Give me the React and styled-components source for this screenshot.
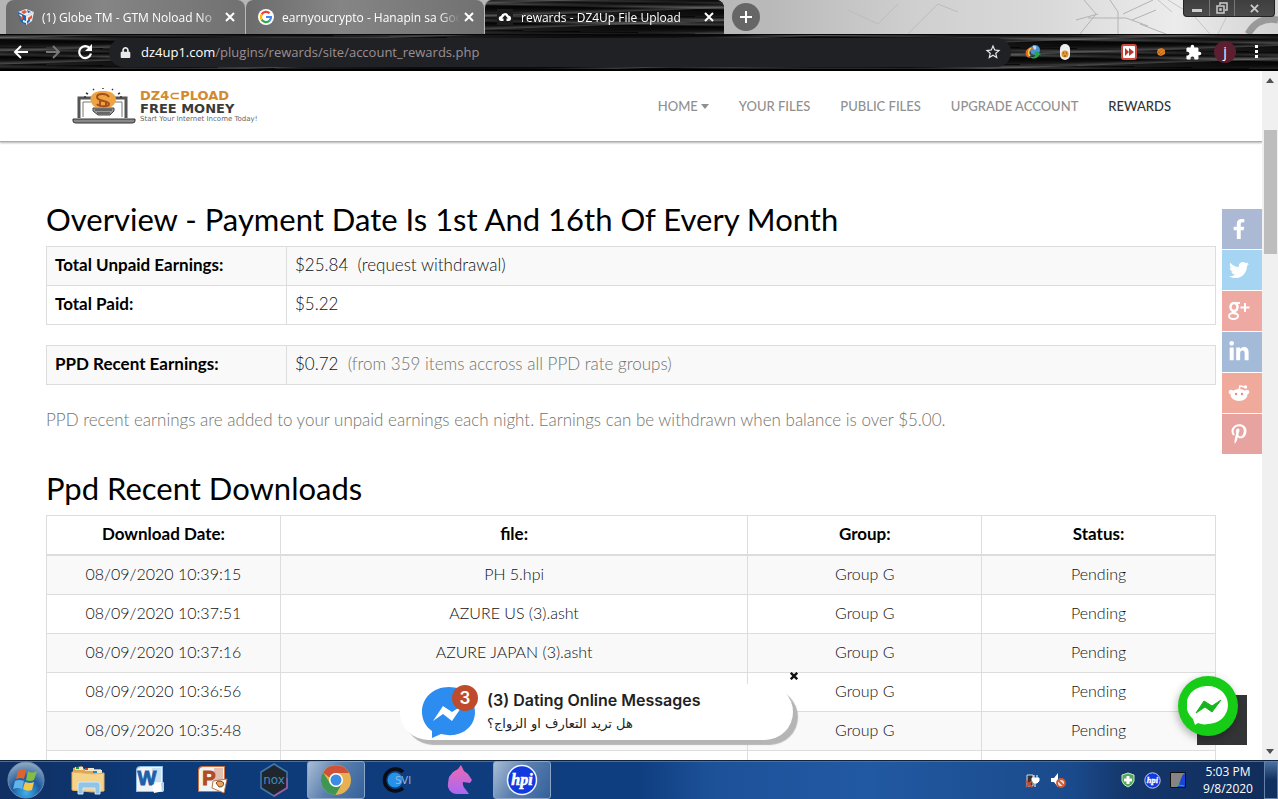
import styled, { createGlobalStyle, css } from 'styled-components';
import { FaFacebookF, FaTwitter, FaLinkedinIn, FaPinterestP, FaLock } from 'react-icons/fa';
import { MdExtension, MdStarBorder } from 'react-icons/md';

const GlobalStyle = createGlobalStyle`
  * {
    box-sizing: border-box;
  }

  body {
    margin: 0;
    background: #fff;
    overflow: hidden;
  }

  button {
    padding: 0;
    border: 0;
    background: none;
    font: inherit;
    color: inherit;
  }

  a {
    color: inherit;
    text-decoration: none;
  }

  svg {
    display: block;
    flex: none;
  }
`;

const uiFont = "'Open Sans', 'Noto Sans', sans-serif";
const pageFont = "Lato, 'Open Sans', sans-serif";

const Desktop = styled.div`
  display: flex;
  flex-direction: column;
  height: 100vh;
  font-family: ${uiFont};
`;

/* browser window */

const TabStrip = styled.div`
  position: relative;
  display: flex;
  height: 34px;
  padding-left: 6px;
  background: linear-gradient(90deg, #b5b5b5, #b9b9b9 60%, #d0d0d0 72%, #d9d9d9 82%, #ececec 92%, #d2d2d2);
`;

const Branches = styled.svg`
  position: absolute;
  top: 0;
  right: 0;
`;

const streaks = css`
  background-color: #0d0d0d;
  background-image: repeating-linear-gradient(
      178deg,
      transparent 0,
      rgba(150, 150, 150, 0.35) 3px,
      transparent 4px,
      rgba(0, 0, 0, 0.5) 9px,
      transparent 13px
    ),
    repeating-linear-gradient(181deg, #080808 0, #3a3a3a 3px, #111 5px, #4a4a4a 8px, #060606 10px, #222 17px);
`;

const Tab = styled.div`
  position: relative;
  display: flex;
  align-items: center;
  gap: 8px;
  flex: 0 1 ${({ $active }) => ($active ? '240px' : '239px')};
  min-width: 0;
  padding: 0 10px 0 12px;
  border-radius: 8px 8px 0 0;
  background: linear-gradient(90deg, #6c6c6c, #858585 40%, #717171);
  color: #fff;
  font-size: 12px;

  & + & {
    border-left: 1px solid #b9b9b9;
  }

  ${({ $active }) => $active && streaks}
`;

const TabTitle = styled.span`
  flex: 1;
  min-width: 0;
  margin-right: -4px;
  overflow: hidden;
  white-space: nowrap;
  mask-image: linear-gradient(90deg, #000 88%, transparent);
`;

const NewTab = styled.button`
  position: relative;
  display: grid;
  place-items: center;
  width: 28px;
  height: 28px;
  margin: 3px 8px;
  border-radius: 50%;
  background: #666;
`;

const WindowControls = styled.div`
  position: absolute;
  top: 0;
  right: 3px;
  display: flex;
  height: 17px;
  border: 1px solid #222;
  border-top: 0;
  border-radius: 0 0 4px 4px;
  background: linear-gradient(#3e3e3e, #4b4b4b);
`;

const WindowButton = styled.button`
  display: grid;
  place-items: center;
  width: ${({ $wide }) => ($wide ? '40px' : '25px')};

  & + & {
    border-left: 1px solid #777;
  }
`;

const Toolbar = styled.div`
  display: flex;
  align-items: center;
  height: 37px;
  padding: 0 5px;
  ${streaks}
  border-top: 1px solid #070707;
  border-bottom: 2px solid #000;
`;

const ToolButton = styled.button`
  display: grid;
  place-items: center;
  width: 32px;
  height: 28px;
  color: #fff;
`;

const AddressBar = styled.form`
  display: flex;
  align-items: center;
  flex: 1;
  gap: 10px;
  height: 29px;
  margin: 0 6px 0 8px;
  padding: 0 9px 0 11px;
  border-radius: 15px;
  background: #202124;
  color: #e8e8e8;
`;

const Address = styled.label`
  position: relative;
  flex: 1;
  font-size: 13px;
  line-height: 20px;
  color: #9c8f93;
  white-space: nowrap;

  b {
    font-weight: 400;
    color: #fff;
  }

  input {
    position: absolute;
    inset: 0;
    width: 100%;
    border: 0;
    background: none;
    outline: none;
  }
`;

const Avatar = styled.span`
  display: grid;
  place-items: center;
  width: 22px;
  height: 22px;
  border-radius: 50%;
  background: #5c1f30;
  font-size: 14px;
  line-height: 20px;
`;

/* site */

const Viewport = styled.div`
  position: relative;
  display: flex;
  flex: 1;
  min-height: 0;
  overflow: hidden;
`;

const Page = styled.div`
  position: relative;
  flex: 1;
  min-width: 0;
  overflow: hidden;
  font-family: ${pageFont};
`;

const SiteHeader = styled.header`
  display: flex;
  align-items: center;
  justify-content: space-between;
  height: 71px;
  padding: 0 91px 0 72px;
  border-bottom: 1px solid #a9b0ac;
  box-shadow: 0 1px 2px rgba(0, 0, 0, 0.3);
`;

const Brand = styled.a`
  display: flex;
  align-items: center;
  gap: 4px;
  font-family: 'DejaVu Sans', sans-serif;
`;

const BrandText = styled.span`
  display: flex;
  flex-direction: column;
  white-space: nowrap;
`;

const BrandLine = styled.span`
  font-size: 13px;
  font-weight: 700;
  line-height: 13px;
  color: ${({ $accent }) => ($accent ? '#d48a2a' : '#3a3a3a')};
`;

const Tagline = styled.span`
  font-size: 7px;
  line-height: 8px;
  color: #666;
`;

const Nav = styled.nav`
  display: flex;
  gap: 30px;
  font-family: ${pageFont};
  font-size: 13px;
  font-weight: 500;
  line-height: 16px;
`;

const NavLink = styled.a`
  display: flex;
  align-items: center;
  gap: 3px;
  color: ${({ $current }) => ($current ? '#333' : '#909090')};
`;

const Content = styled.main`
  padding: 60px 46px 0;
  color: #111;
  font-size: 17px;
  font-weight: 300;
  line-height: 22px;
`;

const Heading = styled.h2`
  margin: 0 0 9px;
  color: #000;
  font-size: 31px;
  font-weight: 400;
  line-height: 35px;
  white-space: nowrap;
`;

const Table = styled.table`
  width: 100%;
  margin-bottom: 20px;
  border-collapse: collapse;
  table-layout: fixed;

  th,
  td {
    padding: 7px 8px 9px;
    border: 1px solid #ddd;
    font-weight: 300;
    text-align: ${({ $centered }) => ($centered ? 'center' : 'left')};
    white-space: nowrap;
  }

  td {
    font-size: ${({ $centered }) => ($centered ? '16px' : '17px')};
  }

  th {
    color: #000;
    font-weight: 700;
  }

  tbody th {
    width: 240px;
  }

  thead th {
    border-bottom-width: 2px;
  }

  tbody tr:nth-child(odd) {
    background: #f9f9f9;
  }
`;

const Note = styled.span`
  color: #73736a;
`;

const Hint = styled.p`
  margin: 24px 0 40px;
  color: #73736a;
`;

const ShareBar = styled.aside`
  position: absolute;
  top: 138px;
  right: 0;
  display: flex;
  flex-direction: column;
  gap: 1px;
`;

const ShareLink = styled.a`
  display: flex;
  align-items: center;
  justify-content: center;
  width: 40px;
  height: 40px;
  padding-right: 6px;
  background: ${({ $color }) => $color};
  color: #fff;
`;

const Popup = styled.section`
  position: absolute;
  bottom: 20px;
  left: 400px;
  display: flex;
  align-items: center;
  gap: 8px;
  width: 393px;
  height: 56px;
  padding-left: 22px;
  border-radius: 28px;
  background: #fff;
  box-shadow: 5px 5px 1px #b5b5b5;
`;

const PopupText = styled.div`
  display: flex;
  flex-direction: column;
  align-items: flex-start;
  color: #222;
`;

const PopupTitle = styled.strong`
  font-family: Inter, sans-serif;
  font-size: 16px;
  font-weight: 600;
  line-height: 24px;
`;

const PopupMessage = styled.span`
  font-family: 'DejaVu Sans', sans-serif;
  font-size: 13px;
  line-height: 24px;
`;

const PopupClose = styled.button`
  position: absolute;
  top: -12px;
  right: -5px;
`;

const TopButton = styled.button`
  position: absolute;
  right: 15px;
  bottom: 15px;
  width: 50px;
  height: 50px;
  background: #333436;
`;

const ChatButton = styled.button`
  position: absolute;
  right: 24px;
  bottom: 24px;
  display: grid;
  place-items: center;
  width: 60px;
  height: 60px;
  border-radius: 50%;
  background: #16cc16;
  box-shadow: -1px 3px 8px rgba(0, 0, 0, 0.3);
`;

const Scrollbar = styled.div`
  display: flex;
  flex-direction: column;
  align-items: center;
  width: 16px;
  padding: 7px 0 6px;
  background: #f0f0f0;
`;

const Thumb = styled.div`
  width: 13px;
  height: 124px;
  margin: 47px 0 auto 1px;
  background: #bdbdbd;
`;

/* taskbar */

const Taskbar = styled.footer`
  display: flex;
  align-items: stretch;
  height: 39px;
  border-top: 1px solid #10233f;
  background: linear-gradient(
    90deg,
    #102f62,
    #0d3a78 12%,
    #0f3e80 50%,
    #1d529a 56%,
    #2159a2 68%,
    #1a4a8b 84%,
    #14376c 88%,
    #102c59
  );
  box-shadow: inset 0 1px 0 #48709f;
  color: #fff;
`;

const StartButton = styled.button`
  display: grid;
  place-items: center;
  width: 52px;
  margin-right: 7px;
`;

const Apps = styled.div`
  display: flex;
  flex: 1;
  gap: 4px;
`;

const AppButton = styled.button`
  display: grid;
  place-items: center;
  width: 58px;
  border: 1px solid transparent;
  border-radius: 3px;

  ${({ $open }) =>
    $open &&
    css`
      border-color: #8ba5c8;
      background: linear-gradient(120deg, #a9bdd6, #5c80ae 45%, #34619b);
    `}
`;

const Tray = styled.div`
  display: flex;
  align-items: center;
`;

const TrayGroup = styled.div`
  display: flex;
  gap: 9px;
  margin-right: ${({ $spaced }) => ($spaced ? '55px' : '6px')};
`;

const Clock = styled.time`
  display: flex;
  flex-direction: column;
  align-items: center;
  width: 72px;
  font-size: 12px;
  line-height: 17px;
  white-space: nowrap;
`;

const ShowDesktop = styled.button`
  align-self: stretch;
  width: 14px;
  border: 1px solid #6482ab;
  background: linear-gradient(#4a6f9f, #12305f 50%);
`;

const CloseIcon = ({ size = 10, color = '#fff', weight = 2 }) => (
  <svg width={size} height={size} viewBox="0 0 10 10" stroke={color} strokeWidth={weight}>
    <path d="M1 1l8 8M9 1l-8 8" />
  </svg>
);

const CubeIcon = () => (
  <svg width="16" height="16" viewBox="0 0 16 16">
    <path d="M0 3l8-3 8 3-8 4z" fill="#e9eef4" />
    <path d="M0 3l8 4v9l-6-4z" fill="#1b67b5" />
    <path d="M16 3L8 7v9l6-4z" fill="#e4ecf5" />
    <path d="M3 3l4-2 2 2-3 2zM2 8l3-1v3l-2 1zM10 9l4-3v3l-4 3z" fill="#e65736" />
    <path d="M9 1l4 2-3 1zM9 12l3-2v2l-3 3z" fill="#1b67b5" />
    <path d="M1 5l3 1v2L2 7zM5 11l3 1v2l-3-1z" fill="#e8f1fb" />
  </svg>
);

const GoogleIcon = () => (
  <svg width="16" height="16" viewBox="0 0 16 16">
    <circle cx="8" cy="8" r="8" fill="#fff" />
    <g fill="none" strokeWidth="2.2">
      <path d="M11.6 4.3A5 5 0 0 0 3.7 5.4" stroke="#ea4335" />
      <path d="M3.7 5.4a5 5 0 0 0 0 5.2" stroke="#fbbc05" />
      <path d="M3.7 10.6a5 5 0 0 0 7.8 1.1" stroke="#34a853" />
      <path d="M11.5 11.7A5 5 0 0 0 13 8H8" stroke="#4285f4" />
    </g>
  </svg>
);

const CloudIcon = () => (
  <svg width="16" height="16" viewBox="0 0 16 16">
    <path d="M0 0h16v16H0z" fill="#1c1c1c" />
    <path
      d="M4.5 12a2.5 2.5 0 0 1-.5-5 4 4 0 0 1 7.5-.5A2.8 2.8 0 0 1 12 12H9.5V9.5H11L8 6 5 9.5h1.5V12z"
      fill="#fff"
    />
  </svg>
);

const ArrowIcon = ({ forward }) => (
  <svg width="16" height="16" viewBox="0 0 16 16" fill="none" stroke={forward ? '#777' : '#fff'} strokeWidth="2">
    {forward ? <path d="M1 8h13M8 2l6 6-6 6" /> : <path d="M15 8H2M8 2L2 8l6 6" />}
  </svg>
);

const ReloadIcon = () => (
  <svg width="16" height="16" viewBox="0 0 16 16">
    <path d="M13 4.5A6 6 0 1 0 14 9.5" fill="none" stroke="#fff" strokeWidth="2.2" />
    <path d="M15 0v7H8z" fill="#fff" />
  </svg>
);

const GlobeExtIcon = () => (
  <svg width="16" height="16" viewBox="0 0 16 16">
    <circle cx="10" cy="6" r="5" fill="#4a92d0" />
    <path d="M8 2c3-1 4 1 3 3s-3 0-3-3z" fill="#b9dff0" />
    <path d="M7 3C1 4-1 9 2 13l3 1C3 9 4 6 8 5z" fill="#e2682c" />
    <path d="M6 4C3 6 3 10 5 12" fill="none" stroke="#f4d444" strokeWidth="1.5" />
    <path d="M4 12c4 2 6 1 7-2H8l4-3 4 4h-2c-1 4-7 5-10 1z" fill="#27a744" />
  </svg>
);

const CapsuleIcon = () => (
  <svg width="10" height="16" viewBox="0 0 10 16">
    <rect width="10" height="16" rx="5" fill="#eee" />
    <circle cx="5" cy="10" r="3.5" fill="#df9430" />
    <path d="M3 9h1M6 9h1M4 12h2" stroke="#7c4a0c" />
  </svg>
);

const SkipIcon = () => (
  <svg width="16" height="16" viewBox="0 0 16 16">
    <rect x="1" y="1" width="14" height="14" rx="2" fill="#fff" stroke="#d3473b" strokeWidth="2" />
    <path d="M4 4l4 4-4 4zM8 4l5 4-5 4z" fill="#b5382b" />
  </svg>
);

const NutIcon = () => (
  <svg width="10" height="10" viewBox="0 0 10 10">
    <path d="M2 2l4-1 3 2v4L5 9 2 8 1 5z" fill="#de8425" />
    <path d="M2 6l5-4M4 8l5-4M2 4l3 4" stroke="#b0571a" strokeWidth="0.7" />
  </svg>
);

const LaptopLogo = () => (
  <svg width="64" height="36" viewBox="0 0 64 36" fill="none">
    <path d="M7 30V10h13M40 10h14v20" stroke="#555" strokeWidth="3" />
    <path d="M11 29V14h8M41 14h9v15" stroke="#777" />
    <path d="M1 31h62v2q0 2-3 2H4q-3 0-3-2z" fill="#888" stroke="#333" />
    <path d="M23 19c-7-5-7-16 8-16s16 11 8 16z" fill="#eda443" />
    <path
      d="M37 9c-2-4-12-4-12 0 0 5 12 3 12 7 0 3-10 3-12 0M28 18v-5M34 18v-5"
      stroke="#a74e1c"
      strokeWidth="2"
    />
    <path d="M21 20h21v3l-4 4H26l-5-4z" fill="#999" stroke="#444" />
    <path d="M23 22h17M25 25h13" stroke="#333" />
    <path d="M31 0v1M22 2l-1-1M40 2l1-1M16 6l-2-1M46 6l2-1M14 9h-2M48 9h2" stroke="#333" strokeWidth="1.5" />
  </svg>
);

const GooglePlusIcon = () => (
  <svg width="24" height="20" viewBox="0 0 24 20" fill="none" stroke="#fff">
    <ellipse cx="7" cy="6" rx="3.5" ry="4" strokeWidth="2.5" />
    <ellipse cx="6.5" cy="15" rx="4.5" ry="3" strokeWidth="2" />
    <path d="M7 2h6M7 10c-2 1 0 2 2 3" strokeWidth="2" />
    <path d="M18 2v9M13.5 6.5h9" strokeWidth="2" />
  </svg>
);

const RedditIcon = () => (
  <svg width="22" height="20" viewBox="0 0 22 20">
    <ellipse cx="11" cy="12" rx="8.5" ry="6" fill="#fff" />
    <circle cx="3" cy="9" r="2.3" fill="#fff" />
    <circle cx="19" cy="9" r="2.3" fill="#fff" />
    <path d="M11 7l1-4 5 1" fill="none" stroke="#fff" strokeWidth="1.5" />
    <circle cx="17.5" cy="4" r="1.7" fill="#fff" />
    <circle cx="8" cy="11" r="1.2" fill="#e58f78" />
    <circle cx="14" cy="11" r="1.2" fill="#e58f78" />
  </svg>
);

const BlueMessenger = () => (
  <svg width="57" height="54" viewBox="0 0 57 54">
    <path d="M27 2C11 2 0 13 0 27c0 8 4 15 10 19v7l9-4c20 5 34-7 34-22C53 13 42 2 27 2z" fill="#2c8cf0" />
    <path d="M11 36l10-15 9 6 11-7-11 16-9-7z" fill="#fff" />
    <circle cx="43" cy="13" r="13" fill="#bd4b2c" />
    <text x="43" y="19" textAnchor="middle" fill="#fff" fontFamily="Inter, sans-serif" fontSize="17" fontWeight="600">
      3
    </text>
  </svg>
);

const GreenMessenger = () => (
  <svg width="42" height="42" viewBox="0 0 42 42">
    <path d="M21 1a20 19 0 0 1 0 38c-4 1-7 0-10-1l-3 2-2-6A20 19 0 0 1 21 1z" fill="#fff" />
    <path d="M9 28l8-12 8 5 9-6-9 12-7-5z" fill="#16b51c" stroke="#16b51c" />
  </svg>
);

const Triangle = ({ down, color = '#505050' }) => (
  <svg width="8" height="5" viewBox="0 0 8 5" fill={color}>
    <path d={down ? 'M0 0h8L4 5z' : 'M0 5h8L4 0z'} />
  </svg>
);

const StartIcon = () => (
  <svg width="38" height="38" viewBox="0 0 38 38">
    <defs>
      <radialGradient id="orb" cx="50%" cy="85%" r="80%">
        <stop offset="0" stopColor="#3fb2ee" />
        <stop offset="0.5" stopColor="#1d5b9f" />
        <stop offset="1" stopColor="#8aa4bd" />
      </radialGradient>
    </defs>
    <circle cx="19" cy="19" r="18" fill="url(#orb)" stroke="#6c8eb5" />
    <path d="M11 10q4-3 8-1l-2 9q-4-2-8 0z" fill="#e0632c" />
    <path d="M21 10q4 3 9 0l-3 9q-4 2-8 0z" fill="#83bd43" />
    <path d="M8 20q4-2 9 0l-2 8q-4-2-9 0z" fill="#5fb5ea" />
    <path d="M18 21q5 2 9 0l-2 8q-5 2-9-1z" fill="#f6c64b" />
  </svg>
);

const FolderIcon = () => (
  <svg width="34" height="32" viewBox="0 0 34 32">
    <path d="M2 4l9-2 2 3h17v22H2z" fill="#dca654" />
    <path d="M4 3h8v3H4zM14 4h9v3h-9zM23 6h8v3h-8z" fill="#f3e6c2" />
    <path d="M5 3h3v2H5z" fill="#2b9b39" />
    <path d="M14 4h3v2h-3z" fill="#ca3c24" />
    <path d="M22 7h4v2h-4z" fill="#2e7fca" />
    <path d="M1 8l22 2 10-1v18l-12 1-20-2z" fill="#f4d38d" stroke="#e7b35e" />
    <path d="M7 30V21q0-3 3-3h16q3 0 3 3v9h-5v-6H12v6z" fill="#90c5e7" stroke="#d1e8f6" />
  </svg>
);

const OfficeIcon = ({ letter, color, dark, children }) => (
  <svg width="32" height="32" viewBox="0 0 32 32">
    <path d="M2 6q0-4 5-4h22v26H2z" fill={color} />
    <path d="M3 7q0-4 5-4h20v24H3z" fill="#f1f4f7" />
    <path d="M18 4h9v14h-9z" fill={color} opacity="0.4" />
    <text
      x="13"
      y="21"
      textAnchor="middle"
      fill={dark}
      stroke={dark}
      fontFamily="Liberation Sans, sans-serif"
      fontSize="20"
      fontWeight="700"
    >
      {letter}
    </text>
    {children}
  </svg>
);

const WordIcon = () => (
  <OfficeIcon letter="W" color="#8fbde3" dark="#1f5fa8">
    <path d="M18 21l10-3 2 9-10 2z" fill="#fff" />
    <path d="M27 19l3-1v9l-2 1z" fill="#b5cfe6" />
  </OfficeIcon>
);

const PowerPointIcon = () => (
  <OfficeIcon letter="P" color="#cc7040" dark="#b34b1c">
    <path d="M17 17l14-2-3 14-12-5z" fill="#fff" stroke="#b9744d" />
    <path d="M20 19a4 3 0 1 1 3 4z" fill="#e5a35c" stroke="#7b4a2a" />
  </OfficeIcon>
);

const NoxIcon = () => (
  <svg width="30" height="34" viewBox="0 0 30 34">
    <path d="M15 1l13 8v16l-13 8-13-8V9z" fill="#20262e" stroke="#407aa9" strokeWidth="1.5" />
    <path d="M28 15v10l-13 8" fill="none" stroke="#9b5a9d" strokeWidth="1.5" />
    <text x="15" y="21" textAnchor="middle" fill="#3f8cc0" fontFamily="DejaVu Sans, sans-serif" fontSize="12">
      nox
    </text>
  </svg>
);

const ChromeIcon = () => (
  <svg width="30" height="30" viewBox="0 0 30 30">
    <circle cx="15" cy="15" r="15" fill="#e8b14f" />
    <path d="M2 7.5A15 15 0 0 1 28 8H15a7 7 0 0 0-6.5 4.5z" fill="#cf5138" />
    <path d="M2 7.5A15 15 0 0 0 14.5 30L21 18.5A7 7 0 0 1 9 18z" fill="#3f9552" />
    <circle cx="15" cy="15" r="7" fill="#fff" />
    <circle cx="15" cy="15" r="5.5" fill="#3b8ce2" />
  </svg>
);

const SviIcon = () => (
  <svg width="34" height="26" viewBox="0 0 34 26">
    <circle cx="14" cy="13" r="7.5" fill="#2591e8" />
    <path d="M22 5A11 11 0 1 0 22 21" fill="none" stroke="#090d16" strokeWidth="3.5" />
    <text x="14" y="17" fill="#8fb6dd" fontFamily="DejaVu Sans, sans-serif" fontSize="10">
      SVI
    </text>
  </svg>
);

const WolfIcon = () => (
  <svg width="26" height="30" viewBox="0 0 26 30">
    <defs>
      <linearGradient id="wolf" x1="0" y1="0" x2="0" y2="1">
        <stop offset="0" stopColor="#ef68b2" />
        <stop offset="1" stopColor="#a768f3" />
      </linearGradient>
    </defs>
    <path d="M14 0l3 6 4 3 4 6-2 3-7-1c-1 5 3 7 6 12H10C4 29 0 24 1 18l1-6 4-5 5-3z" fill="url(#wolf)" />
  </svg>
);

const HpiIcon = ({ size = 32 }) => (
  <svg width={size} height={size} viewBox="0 0 32 32">
    <circle cx="16" cy="16" r="14.5" fill="#1238e0" stroke="#eef4ff" strokeWidth="1.5" />
    <text
      x="16"
      y="21"
      textAnchor="middle"
      fill="#fff"
      stroke="#fff"
      strokeWidth="0.6"
      fontFamily="Liberation Serif, serif"
      fontSize="16"
      fontStyle="italic"
      fontWeight="700"
    >
      hpi
    </text>
  </svg>
);

const PlugIcon = () => (
  <svg width="16" height="16" viewBox="0 0 16 16">
    <path d="M2 3h6v11H2z" fill="#333" stroke="#ddd" />
    <path d="M7 6h7v3l-2 2H9L7 9zM9 3v3M12 3v3M10 11v4" fill="#fff" stroke="#fff" />
    <path d="M1 9l6 6M7 9l-6 6" stroke="#c84c30" strokeWidth="2" />
  </svg>
);

const MutedIcon = () => (
  <svg width="16" height="16" viewBox="0 0 16 16">
    <path d="M1 6h3l4-5v14l-4-5H1z" fill="#fff" />
    <circle cx="11" cy="11" r="4" fill="#e9d9cf" stroke="#cc5b33" strokeWidth="1.8" />
    <path d="M8 8l6 6" stroke="#cc5b33" strokeWidth="1.8" />
  </svg>
);

const ShieldIcon = () => (
  <svg width="14" height="16" viewBox="0 0 14 16">
    <path d="M7 1l6 2v6q-1 4-6 6-5-2-6-6V3z" fill="#55a957" stroke="#c6e8c6" />
    <path d="M7 4v8M3 8h8" stroke="#fff" strokeWidth="3" />
  </svg>
);

const MeterIcon = () => (
  <svg width="16" height="16" viewBox="0 0 16 16">
    <path d="M.5.5h15v15H.5z" fill="#858585" stroke="#111" />
    <path d="M15 1v14H7c4-3 3-11 8-14z" fill="#1745d8" />
    <path d="M6 14l3-1 5 1" fill="none" stroke="#35b651" />
  </svg>
);

const tabs = [
  { title: '(1) Globe TM - GTM Noload No', icon: <CubeIcon /> },
  { title: 'earnyoucrypto - Hanapin sa Goo', icon: <GoogleIcon /> },
  { title: 'rewards - DZ4Up File Upload', icon: <CloudIcon />, active: true },
];

const share = [
  { name: 'Facebook', color: '#abb9d5', icon: <FaFacebookF size={20} /> },
  { name: 'Twitter', color: '#a5d5f3', icon: <FaTwitter size={20} /> },
  { name: 'Google Plus', color: '#efa9a3', icon: <GooglePlusIcon /> },
  { name: 'LinkedIn', color: '#a4bad9', icon: <FaLinkedinIn size={22} /> },
  { name: 'Reddit', color: '#efaa9b', icon: <RedditIcon /> },
  { name: 'Pinterest', color: '#e7a39f', icon: <FaPinterestP size={20} /> },
];

const downloads = [
  ['08/09/2020 10:39:15', 'PH 5.hpi'],
  ['08/09/2020 10:37:51', 'AZURE US (3).asht'],
  ['08/09/2020 10:37:16', 'AZURE JAPAN (3).asht'],
  ['08/09/2020 10:36:56', ''],
  ['08/09/2020 10:35:48', ''],
  ['', ''],
];

const apps = [
  { name: 'Explorer', icon: <FolderIcon /> },
  { name: 'Word', icon: <WordIcon /> },
  { name: 'PowerPoint', icon: <PowerPointIcon /> },
  { name: 'Nox', icon: <NoxIcon /> },
  { name: 'Chrome', icon: <ChromeIcon />, open: true },
  { name: 'SVI', icon: <SviIcon /> },
  { name: 'Wolf', icon: <WolfIcon /> },
  { name: 'HPI', icon: <HpiIcon />, open: true },
];

function BrowserTop() {
  return (
    <>
      <TabStrip>
        <Branches width="430" height="34" viewBox="0 0 430 34" fill="none" stroke="#b3b3b3" aria-hidden="true">
          <path d="M236 0l12 14-16 20M240 18h38l22 8M262 0l8 12v22M275 14l30-14M250 14l-22 6M284 20l24-10M292 24l26 10" />
          <path d="M320 0l26 16 30-4M346 16l16 18M366 0l12 18-8 16M310 0l14 12" stroke="#c4c4c4" />
          <path d="M430 20q-20-4-30 14" stroke="#999" strokeWidth="7" />
          <path d="M0 10l30 14 20-20M60 34l30-30 20 8" stroke="#bdbdbd" />
        </Branches>
        {tabs.map(({ title, icon, active }) => (
          <Tab key={title} $active={active}>
            {icon}
            <TabTitle>{title}</TabTitle>
            <button type="button" aria-label="Close tab">
              <CloseIcon />
            </button>
          </Tab>
        ))}
        <NewTab type="button" aria-label="New tab">
          <svg width="12" height="12" viewBox="0 0 12 12" stroke="#fff" strokeWidth="2">
            <path d="M6 0v12M0 6h12" />
          </svg>
        </NewTab>
        <WindowControls>
          <WindowButton type="button" aria-label="Minimize">
            <svg width="10" height="10" viewBox="0 0 10 10" fill="#ccc">
              <path d="M0 6h10v3H0z" />
            </svg>
          </WindowButton>
          <WindowButton type="button" aria-label="Restore">
            <svg width="12" height="12" viewBox="0 0 12 12" fill="none" stroke="#ccc" strokeWidth="1.5">
              <path d="M4 3V1h7v7H9M1 4h7v7H1zM4 7h1v1H4z" />
            </svg>
          </WindowButton>
          <WindowButton type="button" $wide aria-label="Close">
            <CloseIcon size={9} color="#ccc" />
          </WindowButton>
        </WindowControls>
      </TabStrip>
      <Toolbar>
        <ToolButton type="button" aria-label="Back">
          <ArrowIcon />
        </ToolButton>
        <ToolButton type="button" aria-label="Forward">
          <ArrowIcon forward />
        </ToolButton>
        <ToolButton type="button" aria-label="Reload">
          <ReloadIcon />
        </ToolButton>
        <AddressBar>
          <FaLock size={11} />
          <Address>
            <b>dz4up1.com</b>/plugins/rewards/site/account_rewards.php
            <input type="text" aria-label="Address" />
          </Address>
          <MdStarBorder size={18} />
        </AddressBar>
        <ToolButton type="button" aria-label="Download manager">
          <GlobeExtIcon />
        </ToolButton>
        <ToolButton type="button" aria-label="Capsule">
          <CapsuleIcon />
        </ToolButton>
        <ToolButton type="button" aria-label="Blank extension" />
        <ToolButton type="button" aria-label="Skip">
          <SkipIcon />
        </ToolButton>
        <ToolButton type="button" aria-label="Nut">
          <NutIcon />
        </ToolButton>
        <ToolButton type="button" aria-label="Extensions">
          <MdExtension size={17} />
        </ToolButton>
        <ToolButton type="button" aria-label="Profile">
          <Avatar>j</Avatar>
        </ToolButton>
        <ToolButton type="button" aria-label="Menu">
          <svg width="4" height="14" viewBox="0 0 4 14" fill="#fff">
            <path d="M0 0h3v3H0zM0 5h3v3H0zM0 10h3v3H0z" />
          </svg>
        </ToolButton>
      </Toolbar>
    </>
  );
}

function Site() {
  return (
    <Page>
      <SiteHeader>
        <Brand href="#">
          <LaptopLogo />
          <BrandText>
            <BrandLine $accent>DZ4⊂PLOAD</BrandLine>
            <BrandLine>FREE MONEY</BrandLine>
            <Tagline>Start Your Internet Income Today!</Tagline>
          </BrandText>
        </Brand>
        <Nav>
          <NavLink href="#">
            HOME <Triangle down color="#909090" />
          </NavLink>
          <NavLink href="#">YOUR FILES</NavLink>
          <NavLink href="#">PUBLIC FILES</NavLink>
          <NavLink href="#">UPGRADE ACCOUNT</NavLink>
          <NavLink href="#" $current>
            REWARDS
          </NavLink>
        </Nav>
      </SiteHeader>

      <Content>
        <Heading>Overview - Payment Date Is 1st And 16th Of Every Month</Heading>
        <Table>
          <tbody>
            <tr>
              <th scope="row">Total Unpaid Earnings:</th>
              <td>
                $25.84&nbsp; <a href="#">(request withdrawal)</a>
              </td>
            </tr>
            <tr>
              <th scope="row">Total Paid:</th>
              <td>$5.22</td>
            </tr>
          </tbody>
        </Table>
        <Table>
          <tbody>
            <tr>
              <th scope="row">PPD Recent Earnings:</th>
              <td>
                $0.72&nbsp; <Note>(from 359 items accross all PPD rate groups)</Note>
              </td>
            </tr>
          </tbody>
        </Table>
        <Hint>
          PPD recent earnings are added to your unpaid earnings each night. Earnings can be withdrawn when balance is
          over $5.00.
        </Hint>

        <Heading>Ppd Recent Downloads</Heading>
        <Table $centered>
          <colgroup>
            <col width="20%" />
            <col width="40%" />
            <col width="20%" />
            <col width="20%" />
          </colgroup>
          <thead>
            <tr>
              <th scope="col">Download Date:</th>
              <th scope="col">file:</th>
              <th scope="col">Group:</th>
              <th scope="col">Status:</th>
            </tr>
          </thead>
          <tbody>
            {downloads.map(([date, file], i) => (
              <tr key={i}>
                <td>{date}</td>
                <td>{file}</td>
                <td>{date && 'Group G'}</td>
                <td>{date && 'Pending'}</td>
              </tr>
            ))}
          </tbody>
        </Table>
      </Content>

      <ShareBar>
        {share.map(({ name, color, icon }) => (
          <ShareLink key={name} href="#" aria-label={name} $color={color}>
            {icon}
          </ShareLink>
        ))}
      </ShareBar>
      <Popup>
        <BlueMessenger />
        <PopupText>
          <PopupTitle>(3) Dating Online Messages</PopupTitle>
          <PopupMessage dir="rtl" lang="ar">
            هل تريد التعارف او الزواج؟
          </PopupMessage>
        </PopupText>
        <PopupClose type="button" aria-label="Dismiss">
          <CloseIcon size={8} color="#111" weight={3} />
        </PopupClose>
      </Popup>
      <TopButton type="button" aria-label="Back to top" />
      <ChatButton type="button" aria-label="Chat">
        <GreenMessenger />
      </ChatButton>
    </Page>
  );
}

function App() {
  return (
    <Desktop>
      <GlobalStyle />
      <BrowserTop />
      <Viewport>
        <Site />
        <Scrollbar>
          <Triangle />
          <Thumb />
          <Triangle down />
        </Scrollbar>
      </Viewport>
      <Taskbar>
        <StartButton type="button" aria-label="Start">
          <StartIcon />
        </StartButton>
        <Apps>
          {apps.map(({ name, icon, open }) => (
            <AppButton key={name} type="button" aria-label={name} $open={open}>
              {icon}
            </AppButton>
          ))}
        </Apps>
        <Tray>
          <TrayGroup $spaced>
            <PlugIcon />
            <MutedIcon />
          </TrayGroup>
          <TrayGroup>
            <ShieldIcon />
            <HpiIcon size={17} />
            <MeterIcon />
          </TrayGroup>
          <Clock>
            <span>5:03 PM</span>
            <span>9/8/2020</span>
          </Clock>
          <ShowDesktop type="button" aria-label="Show desktop" />
        </Tray>
      </Taskbar>
    </Desktop>
  );
}

export default App;
